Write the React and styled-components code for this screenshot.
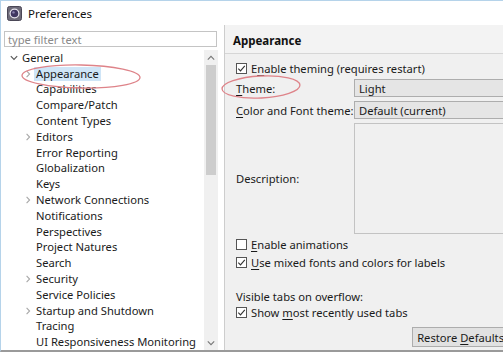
import React from 'react';
import styled, { createGlobalStyle } from 'styled-components';

const Global = createGlobalStyle`
  html, body { margin: 0; padding: 0; background: #fff; overflow: hidden; }
  body {
    font-family: "Noto Sans", "Open Sans", sans-serif;
    font-size: 11.2px;
    color: #1a1a1a;
  }
  * { box-sizing: border-box; }
`;

const Window = styled.div`
  width: 503px;
  height: 352px;
  display: flex;
  flex-direction: column;
  overflow: hidden;
  background: #fff;
  border-top: 1px solid #b5d3ea;
  border-left: 1px solid #b5d3ea;
  border-bottom: 2px solid #9a9a9a;
`;

const TitleBar = styled.div`
  height: 24px;
  flex-shrink: 0;
  display: flex;
  align-items: center;
  gap: 6px;
  padding-left: 6px;
  font-size: 11.5px;
  color: #111;
`;

const Main = styled.div`
  flex: 1;
  min-height: 0;
  display: flex;
`;

const LeftPane = styled.div`
  width: 223px;
  flex-shrink: 0;
  display: flex;
  flex-direction: column;
  background: #fff;
`;

const Filter = styled.div`
  margin: 6px 7px 3px 3px;
  height: 16px;
  border: 1px solid #c4c4c4;
  padding-left: 3px;
  display: flex;
  align-items: center;
  color: #8a8a8a;
`;

const TreeWrap = styled.div`
  flex: 1;
  min-height: 0;
  display: flex;
  margin-right: 6px;
`;

const Tree = styled.div`
  flex: 1;
  overflow: hidden;
`;

const Row = styled.div`
  position: relative;
  height: 15.8px;
  display: flex;
  align-items: center;
  padding-left: ${p => 7 + p.$depth * 14}px;
  white-space: nowrap;
`;

const Twisty = styled.span`
  width: 14px;
  height: 14px;
  flex-shrink: 0;
  display: flex;
  align-items: center;
  justify-content: flex-start;
  padding-left: 2px;
`;

const Label = styled.span`
  padding: 0 2px;
  margin-left: -2px;
  line-height: 14px;
  background: ${p => (p.$selected ? '#cfe5f7' : 'transparent')};
`;

const Scrollbar = styled.div`
  width: 14px;
  flex-shrink: 0;
  background: #f0f0f0;
  display: flex;
  flex-direction: column;
  align-items: center;
`;

const ScrollArrow = styled.div`
  height: 15px;
  width: 100%;
  display: flex;
  align-items: center;
  justify-content: center;
`;

const Thumb = styled.div`
  width: 10px;
  height: 110px;
  background: #cdcdcd;
`;

const Spacer = styled.div`
  flex: 1;
`;

const RightPane = styled.div`
  width: 290px;
  flex-shrink: 0;
  background: #f0f0f0;
  border-left: 1px solid #cdcdcd;
  display: flex;
  flex-direction: column;
`;

const Header = styled.div`
  height: 29px;
  flex-shrink: 0;
  display: flex;
  align-items: center;
  padding: 3px 0 0 8px;
  font-weight: 700;
  font-size: 11.5px;
  color: #111;
  border-bottom: 1px solid #d6d6d6;
  background: #f3f3f3;
`;

const Content = styled.div`
  padding: 6px 4px 0 11px;
  display: flex;
  flex-direction: column;
`;

const CheckRow = styled.label`
  height: ${p => p.$h || 16}px;
  display: flex;
  align-items: center;
  gap: 4px;
  white-space: nowrap;
  margin-top: ${p => p.$mt || 0}px;
`;

const Box = styled.span`
  width: 11px;
  height: 11px;
  border: 1px solid #555;
  background: #fff;
  display: flex;
  align-items: center;
  justify-content: center;
  flex-shrink: 0;
`;

const Mn = styled.span`
  text-decoration: underline;
  text-underline-offset: 2px;
`;

const Grid = styled.div`
  margin-top: 3px;
  display: grid;
  grid-template-columns: 118px 1fr;
  grid-template-rows: 18px 18px 111px;
  row-gap: 4px;
`;

const FieldLabel = styled.div`
  position: relative;
  display: flex;
  align-items: center;
  white-space: nowrap;
`;

const Combo = styled.div`
  background: #e5e5e5;
  border: 1px solid #adadad;
  padding-left: 4px;
  display: flex;
  align-items: center;
`;

const DescBox = styled.div`
  background: #f0f0f0;
  border: 1px solid #c3c3c3;
`;

const Caption = styled.div`
  height: 16px;
  display: flex;
  align-items: center;
  margin-top: ${p => p.$mt || 0}px;
`;

const ButtonRow = styled.div`
  display: flex;
  justify-content: flex-end;
  margin-top: 7px;
`;

const Button = styled.div`
  height: 20px;
  padding: 0 5px 0 4px;
  display: flex;
  align-items: center;
  background: #e1e1e1;
  border: 1px solid #adadad;
  white-space: nowrap;
`;

const Ellipse = styled.svg`
  position: absolute;
  left: ${p => p.$x}px;
  top: ${p => p.$y}px;
  pointer-events: none;
  overflow: visible;
  z-index: 2;
`;

const Check = ({ checked }) => (
  <Box>
    {checked && (
      <svg width="9" height="9" viewBox="0 0 9 9">
        <path d="M1.3 4.6 L3.5 6.9 L7.8 1.8" fill="none" stroke="#333" strokeWidth="1.1" />
      </svg>
    )}
  </Box>
);

const Chevron = ({ open }) => (
  <svg width="8" height="8" viewBox="0 0 8 8">
    {open ? (
      <path d="M0.8 2.2 L4 5.4 L7.2 2.2" fill="none" stroke="#555" strokeWidth="1.1" />
    ) : (
      <path d="M2.6 0.8 L5.6 4 L2.6 7.2" fill="none" stroke="#a8a8a8" strokeWidth="1.1" />
    )}
  </svg>
);

const RedOval = ({ x, y, w, h, rot = 0 }) => (
  <Ellipse $x={x} $y={y} width={w} height={h}>
    <ellipse
      cx={w / 2}
      cy={h / 2}
      rx={w / 2 - 1}
      ry={h / 2 - 1}
      fill="none"
      stroke="#de8389"
      strokeWidth="1.3"
      transform={`rotate(${rot} ${w / 2} ${h / 2})`}
    />
  </Ellipse>
);

const items = [
  { label: 'General', depth: 0, kids: true, open: true },
  { label: 'Appearance', depth: 1, kids: true, selected: true, oval: true },
  { label: 'Capabilities', depth: 1 },
  { label: 'Compare/Patch', depth: 1 },
  { label: 'Content Types', depth: 1 },
  { label: 'Editors', depth: 1, kids: true },
  { label: 'Error Reporting', depth: 1 },
  { label: 'Globalization', depth: 1 },
  { label: 'Keys', depth: 1 },
  { label: 'Network Connections', depth: 1, kids: true },
  { label: 'Notifications', depth: 1 },
  { label: 'Perspectives', depth: 1 },
  { label: 'Project Natures', depth: 1 },
  { label: 'Search', depth: 1 },
  { label: 'Security', depth: 1, kids: true },
  { label: 'Service Policies', depth: 1 },
  { label: 'Startup and Shutdown', depth: 1, kids: true },
  { label: 'Tracing', depth: 1 },
  { label: 'UI Responsiveness Monitoring', depth: 1 },
];

const AppIcon = () => (
  <svg width="15" height="15" viewBox="0 0 15 15">
    <rect x="0.5" y="0.5" width="14" height="14" rx="2" fill="#6d6a78" stroke="#4a4756" />
    <circle cx="7.5" cy="7.5" r="5" fill="#e8e6ee" />
    <circle cx="7.5" cy="7.5" r="3.8" fill="#3f3660" />
    <circle cx="6.5" cy="6.4" r="1.2" fill="#8c83b0" />
  </svg>
);

export default function App() {
  return (
    <>
      <Global />
      <Window>
        <TitleBar>
          <AppIcon />
          <span>Preferences</span>
        </TitleBar>
        <Main>
          <LeftPane>
            <Filter>type filter text</Filter>
            <TreeWrap>
              <Tree>
                {items.map(it => (
                  <Row key={it.label} $depth={it.depth}>
                    <Twisty>{it.kids && <Chevron open={it.open} />}</Twisty>
                    <Label $selected={it.selected}>{it.label}</Label>
                    {it.oval && <RedOval x={20} y={-2} w={120} h={25} rot={1} />}
                  </Row>
                ))}
              </Tree>
              <Scrollbar>
                <ScrollArrow>
                  <svg width="8" height="6" viewBox="0 0 8 6">
                    <path d="M0.8 4.6 L4 1.4 L7.2 4.6" fill="none" stroke="#777" strokeWidth="1.1" />
                  </svg>
                </ScrollArrow>
                <Thumb />
                <Spacer />
                <ScrollArrow>
                  <svg width="8" height="6" viewBox="0 0 8 6">
                    <path d="M0.8 1.4 L4 4.6 L7.2 1.4" fill="none" stroke="#777" strokeWidth="1.1" />
                  </svg>
                </ScrollArrow>
              </Scrollbar>
            </TreeWrap>
          </LeftPane>
          <RightPane>
            <Header>Appearance</Header>
            <Content>
              <CheckRow>
                <Check checked />
                <span>
                  E<Mn>n</Mn>able theming (requires restart)
                </span>
              </CheckRow>
              <Grid>
                <FieldLabel>
                  <span>
                    <Mn>T</Mn>heme:
                  </span>
                  <RedOval x={-15} y={-4} w={80} h={24} rot={-3} />
                </FieldLabel>
                <Combo>Light</Combo>
                <FieldLabel>
                  <span>
                    <Mn>C</Mn>olor and Font theme:
                  </span>
                </FieldLabel>
                <Combo>Default (current)</Combo>
                <FieldLabel>Description:</FieldLabel>
                <DescBox />
              </Grid>
              <CheckRow $h={18} $mt={1}>
                <Check />
                <span>
                  <Mn>E</Mn>nable animations
                </span>
              </CheckRow>
              <CheckRow $h={18}>
                <Check checked />
                <span>
                  <Mn>U</Mn>se mixed fonts and colors for labels
                </span>
              </CheckRow>
              <Caption $mt={17}>Visible tabs on overflow:</Caption>
              <CheckRow>
                <Check checked />
                <span>
                  Show <Mn>m</Mn>ost recently used tabs
                </span>
              </CheckRow>
              <ButtonRow>
                <Button>
                  <span>
                    Restore <Mn>D</Mn>efaults
                  </span>
                </Button>
              </ButtonRow>
            </Content>
          </RightPane>
        </Main>
      </Window>
    </>
  );
}
